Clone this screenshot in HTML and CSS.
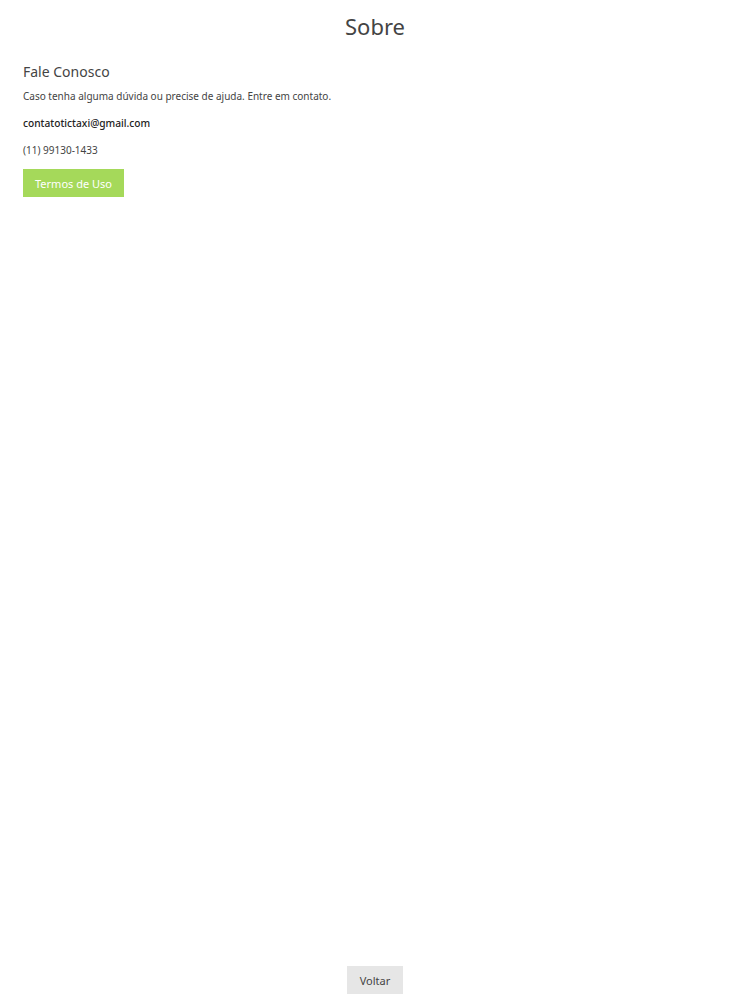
FILE: index.html
```html
<!DOCTYPE html>
<html lang="pt-BR">
<head>
<meta charset="utf-8">
<title>Sobre</title>
<link rel="stylesheet" href="styles.css">
</head>
<body>
<div class="page">
  <h1 class="title">Sobre</h1>
  <section class="content">
    <h2 class="subtitle">Fale Conosco</h2>
    <p class="text">Caso tenha alguma dúvida ou precise de ajuda. Entre em contato.</p>
    <p class="text email">contatotictaxi@gmail.com</p>
    <p class="text">(11) 99130-1433</p>
    <button class="btn-terms">Termos de Uso</button>
  </section>
  <footer class="footer">
    <button class="btn-back">Voltar</button>
  </footer>
</div>
</body>
</html>
```
FILE: styles.css
```css
html, body {
  margin: 0;
  padding: 0;
  background: #fff;
}
body {
  font-family: "Noto Sans", "Open Sans", sans-serif;
  color: #333;
}
.page {
  min-height: 1000px;
  display: flex;
  flex-direction: column;
  box-sizing: border-box;
}
.title {
  margin: 10px 0 0;
  text-align: center;
  font-weight: 400;
  font-size: 22px;
  line-height: 32px;
  color: #444;
}
.content {
  padding: 0 23px;
  display: flex;
  flex-direction: column;
  align-items: flex-start;
}
.subtitle {
  margin: 20px 0 0;
  font-weight: 400;
  font-size: 14px;
  line-height: 20px;
  color: #444;
}
.text {
  margin: 7px 0 0;
  font-size: 10px;
  line-height: 14px;
  color: #444;
}
.text + .text {
  margin-top: 13px;
}
.email {
  font-weight: 500;
  color: #222;
  font-size: 10.2px;
}
.btn-terms {
  margin-top: 12px;
  height: 28px;
  width: 101px;
  border: none;
  background: #a5d95a;
  color: #fff;
  font-family: inherit;
  font-size: 11px;
  padding: 0;
}
.footer {
  margin-top: auto;
  display: flex;
  justify-content: center;
  padding-bottom: 6px;
}
.btn-back {
  width: 56px;
  height: 28px;
  border: none;
  background: #e6e6e6;
  color: #444;
  font-family: inherit;
  font-size: 11px;
  padding: 0;
}
```
